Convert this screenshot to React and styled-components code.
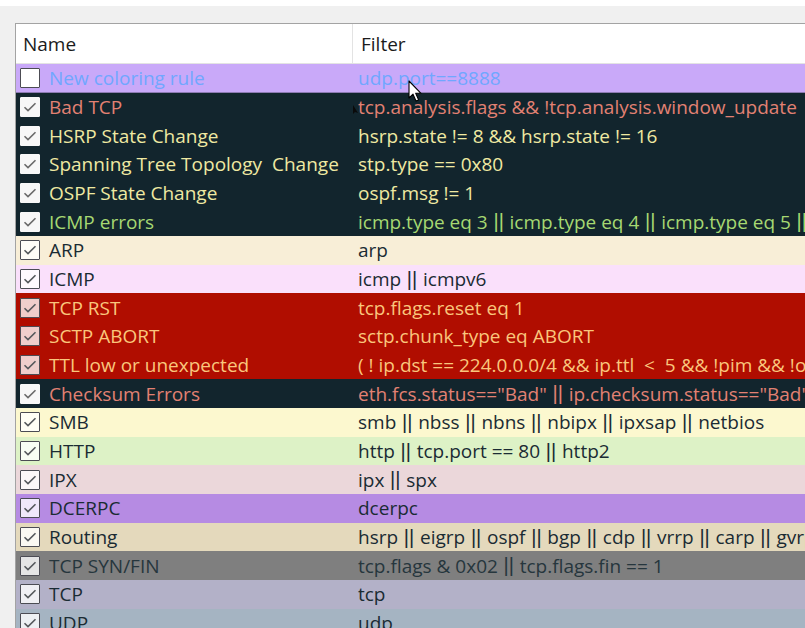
import React from 'react';
import styled, { createGlobalStyle } from 'styled-components';

const GlobalStyle = createGlobalStyle`
  html, body {
    margin: 0;
    padding: 0;
    background: #f0f0f0;
    overflow: hidden;
  }
  body {
    font-family: "Open Sans", "Noto Sans", sans-serif;
  }
`;

const Page = styled.div`
  position: relative;
  width: 805px;
  height: 628px;
  overflow: hidden;
  background: #f0f0f0;
`;

const TopStrip = styled.div`
  height: 6px;
  background: #ffffff;
`;

const Frame = styled.div`
  padding: 17px 0 0 15px;
`;

const Table = styled.div`
  border-left: 1px solid #a3a3a3;
  border-top: 1px solid #a3a3a3;
  background: #ffffff;
  width: 900px;
`;

const HeaderRow = styled.div`
  display: grid;
  grid-template-columns: 337px 1fr;
  height: 39px;
  border-bottom: 1px solid #e3e3e3;
  color: #1b1b1b;
  font-size: 19px;
`;

const HeaderCell = styled.div`
  display: flex;
  align-items: center;
  padding-left: ${(p) => p.$pad}px;
  border-right: ${(p) => (p.$divider ? '1px solid #e3e3e3' : 'none')};
`;

const Row = styled.div`
  display: grid;
  grid-template-columns: 337px 1fr;
  height: 28.68px;
  box-sizing: border-box;
  background: ${(p) => p.$bg};
  color: ${(p) => p.$fg};
  font-size: 19px;
  border-bottom: ${(p) => (p.$current ? '1px solid #8d7bb3' : 'none')};
`;

const NameCell = styled.div`
  display: flex;
  align-items: center;
  gap: 9px;
  padding-left: 4px;
  white-space: pre;
  overflow: hidden;
`;

const FilterCell = styled.div`
  display: flex;
  align-items: center;
  padding-left: 5px;
  white-space: pre;
  overflow: hidden;
`;

const Pipe = styled.span`
  font-family: "Liberation Sans", sans-serif;
  font-size: 20px;
  margin: 0 0.8px;
`;

const Box = styled.span`
  flex: none;
  width: 20px;
  height: 20px;
  box-sizing: border-box;
  display: flex;
  align-items: center;
  justify-content: center;
  border-radius: 1px;
  background: ${(p) => (p.$dark ? '#f7f7f7' : p.$checked ? 'rgba(255,255,255,0.8)' : '#ffffff')};
  border: ${(p) => (p.$dark ? '1px solid #f7f7f7' : '1.5px solid #4c4c54')};
`;

const Cursor = styled.svg`
  position: absolute;
  left: 408px;
  top: 80px;
`;

const Blip = styled.svg`
  position: absolute;
  left: 352px;
  top: 104px;
`;

const DARK = '#12252d';

const rules = [
  { name: 'New coloring rule', filter: 'udp.port==8888', bg: '#c9a9f9', fg: '#70a7ff', off: true, current: true },
  { name: 'Bad TCP', filter: 'tcp.analysis.flags && !tcp.analysis.window_update', bg: DARK, fg: '#e28173', dark: true },
  { name: 'HSRP State Change', filter: 'hsrp.state != 8 && hsrp.state != 16', bg: DARK, fg: '#efe9a2', dark: true },
  { name: 'Spanning Tree Topology  Change', filter: 'stp.type == 0x80', bg: DARK, fg: '#efe9a2', dark: true },
  { name: 'OSPF State Change', filter: 'ospf.msg != 1', bg: DARK, fg: '#efe9a2', dark: true },
  { name: 'ICMP errors', filter: 'icmp.type eq 3 || icmp.type eq 4 || icmp.type eq 5 || icmp.type eq 11', bg: DARK, fg: '#a6d872', dark: true },
  { name: 'ARP', filter: 'arp', bg: '#f8eed7', fg: '#1a2b33' },
  { name: 'ICMP', filter: 'icmp || icmpv6', bg: '#fae0fb', fg: '#1a2b33' },
  { name: 'TCP RST', filter: 'tcp.flags.reset eq 1', bg: '#b00d00', fg: '#fac67c' },
  { name: 'SCTP ABORT', filter: 'sctp.chunk_type eq ABORT', bg: '#b00d00', fg: '#fac67c' },
  { name: 'TTL low or unexpected', filter: '( ! ip.dst == 224.0.0.0/4 && ip.ttl  <  5 && !pim && !ospf)', bg: '#b00d00', fg: '#fac67c' },
  { name: 'Checksum Errors', filter: 'eth.fcs.status=="Bad" || ip.checksum.status=="Bad"', bg: DARK, fg: '#e28173', dark: true },
  { name: 'SMB', filter: 'smb || nbss || nbns || nbipx || ipxsap || netbios', bg: '#fcf8cf', fg: '#1a2b33' },
  { name: 'HTTP', filter: 'http || tcp.port == 80 || http2', bg: '#ddf2c6', fg: '#1a2b33' },
  { name: 'IPX', filter: 'ipx || spx', bg: '#ebd7da', fg: '#1a2b33' },
  { name: 'DCERPC', filter: 'dcerpc', bg: '#b68be3', fg: '#1a2b33' },
  { name: 'Routing', filter: 'hsrp || eigrp || ospf || bgp || cdp || vrrp || carp || gvrp', bg: '#e4d9bc', fg: '#1a2b33' },
  { name: 'TCP SYN/FIN', filter: 'tcp.flags & 0x02 || tcp.flags.fin == 1', bg: '#7f7f7f', fg: '#26363d' },
  { name: 'TCP', filter: 'tcp', bg: '#b3b1c8', fg: '#1a2b33' },
  { name: 'UDP', filter: 'udp', bg: '#a5b4c2', fg: '#1a2b33' },
];

// pipes in the original font are much narrower than in Open Sans
const renderFilter = (text) =>
  text.split('||').flatMap((part, i) =>
    i === 0 ? [part] : [<Pipe key={i}>||</Pipe>, part]
  );

const Check = ({ checked, dark }) => (
  <Box $checked={checked} $dark={dark}>
    {checked && (
      <svg width="14" height="12" viewBox="0 0 14 12">
        <path d="M1.5 6.2 L5 9.6 L12.5 2.2" fill="none" stroke={dark ? '#6a6a6a' : '#55585c'} strokeWidth="1.6" />
      </svg>
    )}
  </Box>
);

const App = () => (
  <>
    <GlobalStyle />
    <Page>
      <TopStrip />
      <Frame>
        <Table>
          <HeaderRow>
            <HeaderCell $pad={7} $divider>Name</HeaderCell>
            <HeaderCell $pad={8}>Filter</HeaderCell>
          </HeaderRow>
          {rules.map((r) => (
            <Row key={r.name} $bg={r.bg} $fg={r.fg} $current={r.current}>
              <NameCell>
                <Check checked={!r.off} dark={r.dark} />
                {r.name}
              </NameCell>
              <FilterCell>{renderFilter(r.filter)}</FilterCell>
            </Row>
          ))}
        </Table>
      </Frame>
      <Cursor width="16" height="24" viewBox="0 0 16 24">
        <path d="M1 1 L1 18 L5 14.2 L8 21 L10.6 19.9 L7.7 13.3 L13 13.3 Z" fill="#ffffff" stroke="#000000" strokeWidth="1.1" strokeLinejoin="round" />
      </Cursor>
      <Blip width="8" height="12" viewBox="0 0 8 12">
        <path d="M1 1 L1 10 L3 8 L6 9 Z" fill="#0a0a0a" />
      </Blip>
    </Page>
  </>
);

export default App;
